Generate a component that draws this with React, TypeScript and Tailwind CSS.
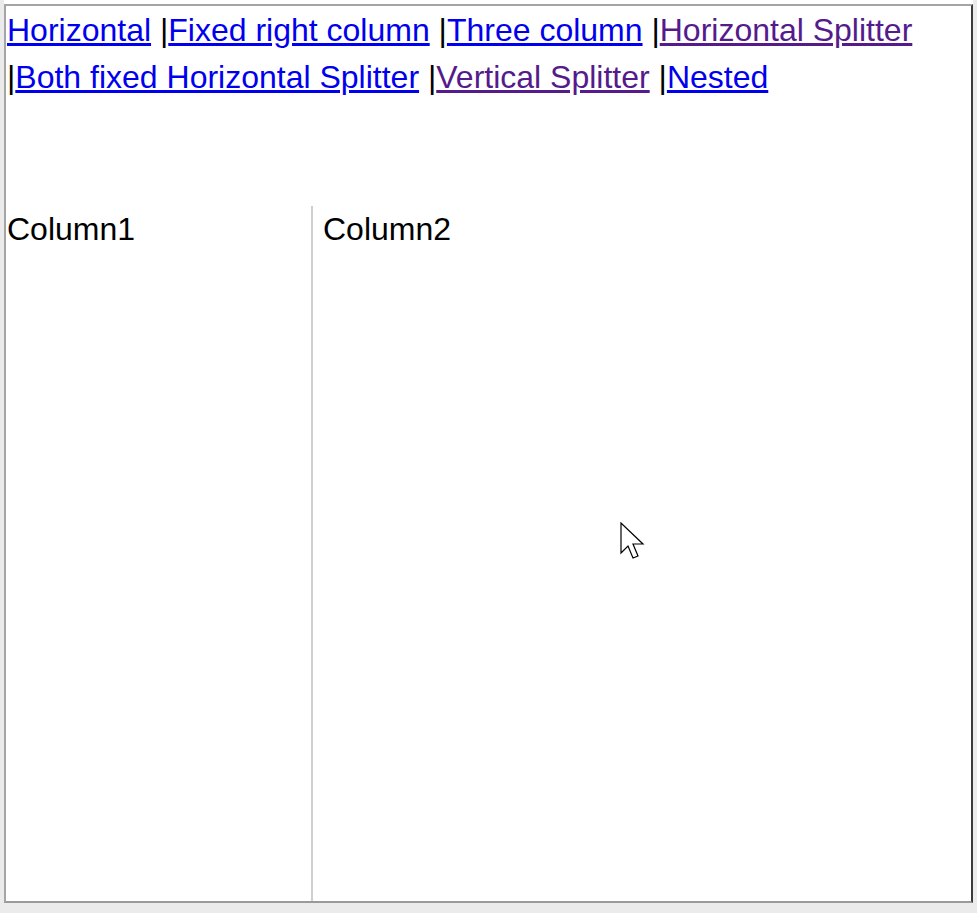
const links = [
  { label: "Horizontal", visited: false },
  { label: "Fixed right column", visited: false },
  { label: "Three column", visited: false },
  { label: "Horizontal Splitter", visited: true },
  { label: "Both fixed Horizontal Splitter", visited: false },
  { label: "Vertical Splitter", visited: true },
  { label: "Nested", visited: false },
];

const Cursor = () => (
  <svg
    className="absolute left-[620px] top-[522px]"
    width="26"
    height="40"
    viewBox="0 0 26 40"
  >
    <path
      d="M1 1 L1 31 L8 24 L13 36 L18 34 L13 22 L23 22 Z"
      fill="white"
      stroke="black"
      strokeWidth="1.2"
      strokeLinejoin="miter"
    />
  </svg>
);

export default function App() {
  return (
    <div className="w-[977px] h-[913px] bg-[#ebebeb] relative font-['Liberation_Sans',Arial,sans-serif]">
      <div className="h-[4px] bg-white ml-[4px] mr-[4px]" />
      <div className="ml-[4px] w-[969px] h-[899px] bg-white border-t-2 border-l-2 border-b-2 border-r-2 border-t-[#a5a5a5] border-l-[#a5a5a5] border-b-[#9a9a9a] border-r-[#3a3a3a] flex flex-col">
        <div className="pl-[1px] pt-[1px] text-[32px] leading-[47px] text-black">
          {links.map((l, i) => (
            <span key={l.label}>
              {i > 0 && <span>{i === 4 ? "" : " "}|</span>}
              <a
                href="#"
                className={`underline ${l.visited ? "text-[#551a8b]" : "text-[#0000ee]"}`}
              >
                {l.label}
              </a>
              {i === 3 && <br />}
            </span>
          ))}
        </div>
        <div className="mt-[105px] flex flex-1 text-[32px] leading-[47px] text-black">
          <div className="w-[307px] pl-[1px] border-r-2 border-r-[#cfcfcf]">Column1</div>
          <div className="flex-1 pl-[10px]">Column2</div>
        </div>
      </div>
      <Cursor />
    </div>
  );
}
